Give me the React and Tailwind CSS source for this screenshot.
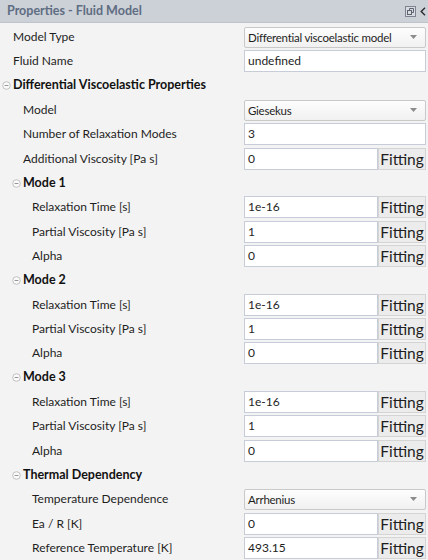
import React from 'react';

const font = { fontFamily: 'Lato, "Open Sans", sans-serif' };

const Collapse = () => (
  <svg width="9" height="9" viewBox="0 0 9 9" className="shrink-0">
    <circle cx="4.5" cy="4.5" r="3.8" fill="#fafafa" stroke="#b4b4b4" strokeWidth="0.8" />
    <line x1="2.6" y1="4.5" x2="6.4" y2="4.5" stroke="#8a8a8a" strokeWidth="0.9" />
  </svg>
);

const Select = ({ value }) => (
  <div className="flex items-center justify-between w-[182px] h-[21px] border border-[#c9c9c9] rounded-[2px] bg-gradient-to-b from-[#fdfdfd] to-[#f1f1f1] pl-[3px] pr-[8px] text-[11.5px] tracking-[-0.25px] text-[#1e1e1e] whitespace-nowrap">
    <span>{value}</span>
    <svg width="7" height="4" viewBox="0 0 7 4"><path d="M0 0h7L3.5 4z" fill="#8c8c8c" /></svg>
  </div>
);

const TextBox = ({ value, full }) => (
  <div className={`flex items-center h-[22px] border border-[#c6cdd8] bg-white pl-[3px] text-[12px] text-[#1e1e1e] ${full ? 'w-[182px]' : 'w-[134px]'}`}>
    {value}
  </div>
);

const Fitting = () => (
  <div className="flex items-center justify-center w-[48px] h-[22px] border border-[#d4d4d4] bg-[#ececec] text-[15.5px] text-[#1e1e1e] pt-[1px]">
    Fitting
  </div>
);

const Row = ({ label, indent, children }) => (
  <div className="flex items-center h-[24.33px]">
    <div className={`flex-1 text-[12px] text-[#1e1e1e] whitespace-nowrap ${indent}`}>{label}</div>
    <div className="flex items-center w-[184px]">{children}</div>
  </div>
);

const Header = ({ label, iconIndent, textIndent }) => (
  <div className={`flex items-center h-[24.33px] ${iconIndent}`}>
    <Collapse />
    <span className={`text-[12.5px] font-bold text-[#111] ${textIndent}`}>{label}</span>
  </div>
);

const ModeBlock = ({ n }) => (
  <>
    <Header label={`Mode ${n}`} iconIndent="pl-[12px]" textIndent="ml-[2px]" />
    <Row label="Relaxation Time [s]" indent="pl-[32px]"><TextBox value="1e-16" /><Fitting /></Row>
    <Row label="Partial Viscosity [Pa s]" indent="pl-[32px]"><TextBox value="1" /><Fitting /></Row>
    <Row label="Alpha" indent="pl-[32px]"><TextBox value="0" /><Fitting /></Row>
  </>
);

export default function App() {
  return (
    <div className="w-[428px] h-[560px] bg-[#f3f3f3] overflow-hidden" style={font}>
      <div className="flex items-center justify-between h-[23px] bg-[#ccd0d7] pl-[7px] pr-[2px] border-b border-[#bfc3ca]">
        <span className="text-[12.5px] font-bold text-[#5e6d82]">Properties - Fluid Model</span>
        <div className="flex items-center gap-[4px]">
          <svg width="11" height="11" viewBox="0 0 11 11">
            <rect x="0.5" y="0.5" width="10" height="10" fill="#d8dbe0" stroke="#7d848f" />
            <rect x="2.5" y="4.5" width="4" height="4" fill="none" stroke="#5d6470" />
            <path d="M4.5 4.5V2.5h4v4h-2" fill="none" stroke="#5d6470" />
          </svg>
          <svg width="6" height="9" viewBox="0 0 6 9"><path d="M5 0.8L1.2 4.5 5 8.2" fill="none" stroke="#2c2c2c" strokeWidth="1.4" /></svg>
        </div>
      </div>
      <div className="pt-[2px]">
        <Row label="Model Type" indent="pl-[13px]"><Select value="Differential viscoelastic model" /></Row>
        <Row label="Fluid Name" indent="pl-[13px]"><TextBox value="undefined" full /></Row>
        <Header label="Differential Viscoelastic Properties" iconIndent="pl-[2px]" textIndent="ml-[2px]" />
        <Row label="Model" indent="pl-[23px]"><Select value="Giesekus" /></Row>
        <Row label="Number of Relaxation Modes" indent="pl-[23px]"><TextBox value="3" full /></Row>
        <Row label="Additional Viscosity [Pa s]" indent="pl-[23px]"><TextBox value="0" /><Fitting /></Row>
        <ModeBlock n={1} />
        <ModeBlock n={2} />
        <ModeBlock n={3} />
        <Header label="Thermal Dependency" iconIndent="pl-[12px]" textIndent="ml-[2px]" />
        <Row label="Temperature Dependence" indent="pl-[32px]"><Select value="Arrhenius" /></Row>
        <Row label="Ea / R [K]" indent="pl-[32px]"><TextBox value="0" /><Fitting /></Row>
        <Row label="Reference Temperature [K]" indent="pl-[32px]"><TextBox value="493.15" /><Fitting /></Row>
      </div>
    </div>
  );
}
